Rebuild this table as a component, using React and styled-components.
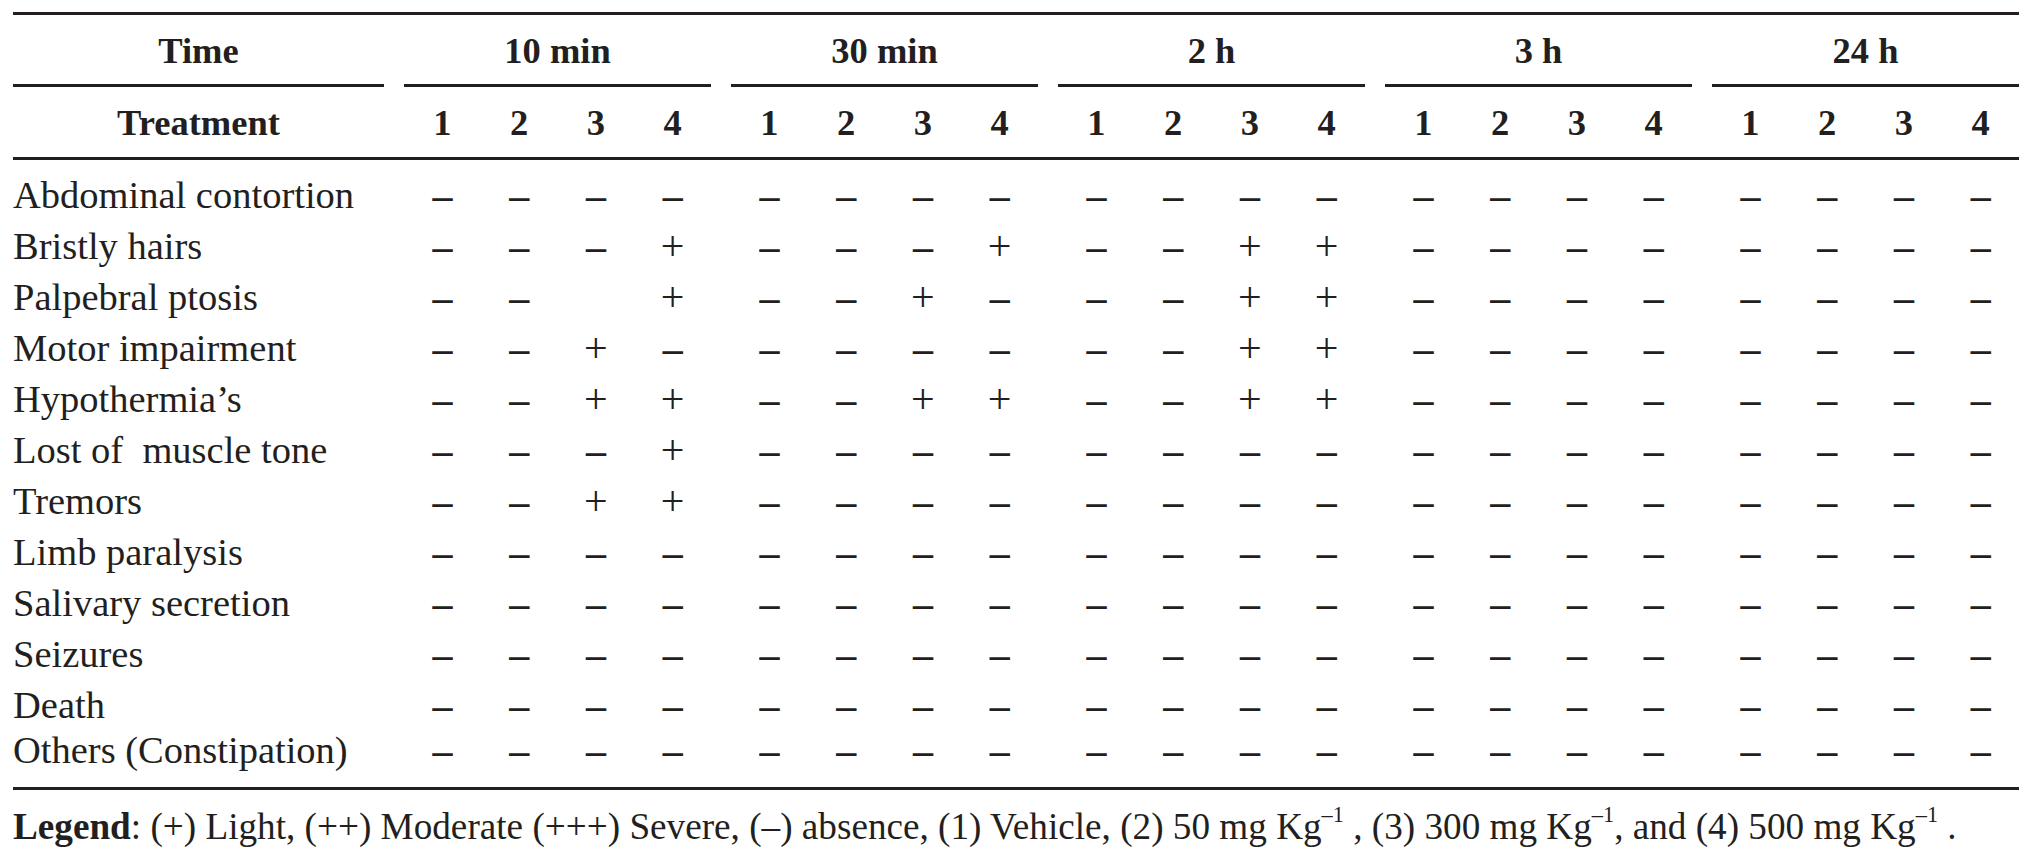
import React from "react";
import styled, { createGlobalStyle } from "styled-components";

const GlobalStyle = createGlobalStyle`
  html, body {
    margin: 0;
    padding: 0;
    background: #ffffff;
  }
  body {
    font-family: "Liberation Serif", "Times New Roman", serif;
    color: #231f20;
  }
`;

const groups = ["10 min", "30 min", "2 h", "3 h", "24 h"];

// one char per treatment column: "-" absence, "+" light, " " empty
const rows = [
  ["Abdominal contortion", "--------------------"],
  ["Bristly hairs", "---+---+--++--------"],
  ["Palpebral ptosis", "-- +--+---++--------"],
  ["Motor impairment", "--+-------++--------"],
  ["Hypothermia’s", "--++--++--++--------"],
  ["Lost of\u00a0 muscle tone", "---+----------------"],
  ["Tremors", "--++----------------"],
  ["Limb paralysis", "--------------------"],
  ["Salivary secretion", "--------------------"],
  ["Seizures", "--------------------"],
  ["Death", "--------------------"],
  ["Others (Constipation)", "--------------------"],
];

const App = () => {
  return (
    <Page>
      <GlobalStyle />
      <Table>
        <GroupRow>
          <HeadCell $ruled>Time</HeadCell>
          {groups.map((g) => (
            <HeadCell key={g} $ruled>
              {g}
            </HeadCell>
          ))}
        </GroupRow>
        <TreatmentRow>
          <HeadCell>Treatment</HeadCell>
          {groups.map((g) => (
            <SubGrid key={g}>
              {[1, 2, 3, 4].map((n) => (
                <NumCell key={n}>{n}</NumCell>
              ))}
            </SubGrid>
          ))}
        </TreatmentRow>
        <Body>
          {rows.map(([label, marks], i) => (
            <DataRow key={label} $last={i === rows.length - 1}>
              <Label>{label}</Label>
              {groups.map((g, gi) => (
                <SubGrid key={g}>
                  {marks
                    .slice(gi * 4, gi * 4 + 4)
                    .split("")
                    .map((m, k) => (
                      <Mark key={k} $plus={m === "+"}>
                        {m === "-" ? "–" : m === "+" ? "+" : ""}
                      </Mark>
                    ))}
                </SubGrid>
              ))}
            </DataRow>
          ))}
        </Body>
      </Table>
      <Legend>
        <b>Legend</b>: (+) Light, (++) Moderate (+++) Severe, (–) absence, (1)
        Vehicle, (2) 50 mg Kg<Sup>–1</Sup> , (3) 300 mg Kg<Sup>–1</Sup>, and (4)
        500 mg Kg<Sup>–1</Sup> .
      </Legend>
    </Page>
  );
};

const Page = styled.div`
  padding: 12px 12px 0 13px;
  width: 2006px;
`;

const Table = styled.div`
  border-top: 3px solid #231f20;
  border-bottom: 3px solid #231f20;
`;

const Row = styled.div`
  display: grid;
  grid-template-columns: 371px repeat(5, 307px);
  column-gap: 20px;
`;

const GroupRow = styled(Row)`
  height: 72px;
`;

const TreatmentRow = styled(Row)`
  height: 70px;
  border-bottom: 3px solid #231f20;
`;

const HeadCell = styled.div`
  font-weight: 700;
  font-size: 36.5px;
  text-align: center;
  line-height: ${(p) => (p.$ruled ? "67px" : "70px")};
  padding-top: ${(p) => (p.$ruled ? "2px" : "1px")};
  box-sizing: border-box;
  height: 100%;
  border-bottom: ${(p) => (p.$ruled ? "3px solid #231f20" : "none")};
`;

const SubGrid = styled.div`
  display: grid;
  grid-template-columns: repeat(4, 1fr);
`;

const NumCell = styled.div`
  font-weight: 700;
  font-size: 36.5px;
  text-align: center;
  line-height: 70px;
  padding-top: 1px;
`;

const Body = styled.div`
  padding: 10px 0 18px;
`;

const DataRow = styled(Row)`
  height: ${(p) => (p.$last ? "38px" : "51px")};
  line-height: 51px;
  margin-top: ${(p) => (p.$last ? "-6px" : "0")};
  margin-bottom: ${(p) => (p.$last ? "6px" : "0")};
`;

const Label = styled.div`
  font-size: 38.5px;
  white-space: nowrap;
`;

const Mark = styled.div`
  text-align: center;
  font-size: ${(p) => (p.$plus ? "42px" : "40px")};
  font-weight: ${(p) => (p.$plus ? 400 : 700)};
`;

const Legend = styled.div`
  margin-top: 15px;
  font-size: 37.2px;
  line-height: 44px;
  white-space: nowrap;

  b {
    font-weight: 700;
  }
`;

const Sup = styled.sup`
  font-size: 0.6em;
  line-height: 0;
  vertical-align: 0.75em;
`;

export default App;
